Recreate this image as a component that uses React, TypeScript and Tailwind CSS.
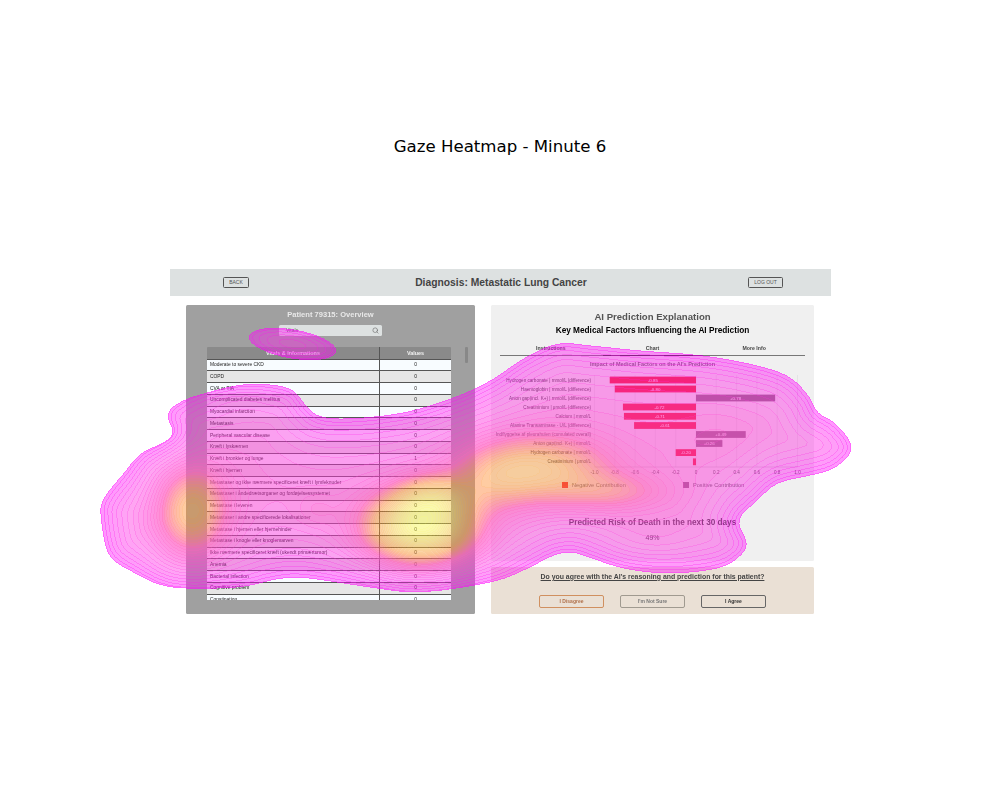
import { Search } from 'lucide-react'

const rows = [
  ['Moderate to severe CKD', '0'],
  ['COPD', '0'],
  ['CVA or TIA', '0'],
  ['Uncomplicated diabetes mellitus', '0'],
  ['Myocardial infarction', '0'],
  ['Metastasis', '0'],
  ['Peripheral vascular disease', '0'],
  ['Kræft i lyskærnen', '0'],
  ['Kræft i bronkier og lunge', '1'],
  ['Kræft i hjernen', '0'],
  ['Metastaser og ikke nærmere specificeret kræft i lymfeknuder', '0'],
  ['Metastaser i åndedrætsorganer og fordøjelsessystemet', '0'],
  ['Metastase i leveren', '0'],
  ['Metastaser i andre specificerede lokalisationer', '0'],
  ['Metastase i hjernen eller hjernehinder', '0'],
  ['Metastase i knogle eller knoglemarven', '0'],
  ['Ikke nærmere specificeret kræft (ukendt primærtumor)', '0'],
  ['Anemia', '0'],
  ['Bacterial infection', '0'],
  ['Cognitive problem', '0'],
  ['Constipation', '0'],
]

const factors = [
  { label: 'Hydrogen carbonate | mmol/L (difference)', value: -0.85 },
  { label: 'Haemoglobin | mmol/L (difference)', value: -0.8 },
  { label: 'Anion gap(incl. K+) | mmol/L (difference)', value: 0.78 },
  { label: 'Creatininium | μmol/L (difference)', value: -0.72 },
  { label: 'Calcium | mmol/L', value: -0.71 },
  { label: 'Alanine Transaminase - U/L (difference)', value: -0.61 },
  { label: 'Indflyggelse af pleurahulen (cumulated overall)', value: 0.49 },
  { label: 'Anion gap(incl. K+) | mmol/L', value: 0.26 },
  { label: 'Hydrogen carbonate | mmol/L', value: -0.2 },
  { label: 'Creatininium | μmol/L', value: -0.03 },
]

const ticks = ['-1.0', '-0.8', '-0.6', '-0.4', '-0.2', '0', '0.2', '0.4', '0.6', '0.8', '1.0']

// outline of the gaze density, page coordinates
const outline = [
  [100, 505], [107, 492], [123, 473], [140, 453], [163, 442], [173, 432], [167, 418], [170, 408],
  [187, 398], [207, 392], [230, 386], [257, 383], [290, 388], [303, 402], [317, 415], [347, 418],
  [403, 412], [453, 397], [490, 380], [523, 358], [557, 343], [590, 345], [640, 350], [703, 355],
  [757, 365], [790, 377], [810, 398], [817, 412], [835, 423], [852, 447], [835, 467], [810, 475],
  [777, 483], [757, 500], [738, 520], [747, 543], [738, 557], [717, 568], [670, 573], [623, 568],
  [583, 555], [570, 552], [553, 555], [523, 570], [490, 582], [420, 592], [370, 587], [337, 582],
  [297, 577], [270, 580], [237, 587], [170, 587], [133, 572], [110, 557], [103, 537], [100, 513],
]

// x, y, amplitude, sigma x, sigma y
const peaks = [
  [420, 527, 0.74, 36, 24],
  [432, 497, 0.26, 24, 15],
  [192, 510, 0.36, 24, 32],
  [540, 468, 0.34, 48, 24],
  [612, 492, 0.16, 40, 14],
  [492, 480, 0.14, 30, 22],
  [315, 510, 0.05, 14, 12],
  [225, 398, 0.03, 28, 10],
  [720, 435, 0.03, 30, 22],
  [650, 540, 0.03, 30, 14],
]

const colorStops = [
  [0, 255, 0, 255],
  [0.35, 255, 90, 190],
  [0.55, 255, 140, 40],
  [0.8, 250, 210, 60],
  [1, 255, 255, 60],
]

const X0 = 90
const Y0 = 322
const W = 772
const H = 280
const STEP = 3
const LEVELS = 44

function buildHeatmap() {
  const poly: number[][] = []
  const n = outline.length
  for (let i = 0; i < n; i++) {
    const p0 = outline[(i + n - 1) % n]
    const p1 = outline[i]
    const p2 = outline[(i + 1) % n]
    const p3 = outline[(i + 2) % n]
    for (let k = 0; k < 3; k++) {
      const t = k / 3
      const c = (a: number, b: number, d: number, e: number) =>
        0.5 * (2 * b + (d - a) * t + (2 * a - 5 * b + 4 * d - e) * t * t + (3 * b - a - 3 * d + e) * t * t * t)
      poly.push([c(p0[0], p1[0], p2[0], p3[0]), c(p0[1], p1[1], p2[1], p3[1])])
    }
  }

  const cw = Math.ceil(W / STEP) + 2
  const ch = Math.ceil(H / STEP) + 2
  let sdf = new Float32Array(cw * ch)
  for (let j = 0; j < ch; j++) {
    for (let i = 0; i < cw; i++) {
      const x = X0 + i * STEP
      const y = Y0 + j * STEP
      let best = 1e9
      let inside = false
      for (let a = 0, b = poly.length - 1; a < poly.length; b = a++) {
        const [ax, ay] = poly[a]
        const [bx, by] = poly[b]
        const dx = bx - ax
        const dy = by - ay
        const u = Math.max(0, Math.min(1, ((x - ax) * dx + (y - ay) * dy) / (dx * dx + dy * dy)))
        const ex = x - ax - u * dx
        const ey = y - ay - u * dy
        best = Math.min(best, ex * ex + ey * ey)
        if (ay > y !== by > y && x < ((bx - ax) * (y - ay)) / (by - ay) + ax) inside = !inside
      }
      sdf[j * cw + i] = (inside ? 1 : -1) * Math.sqrt(best)
    }
  }
  // soften the creases of the distance field
  for (let pass = 0; pass < 2; pass++) {
    const next = new Float32Array(sdf)
    for (let j = 1; j < ch - 1; j++) {
      for (let i = 1; i < cw - 1; i++) {
        let s = 0
        for (let b = -1; b <= 1; b++) for (let a = -1; a <= 1; a++) s += sdf[(j + b) * cw + i + a]
        next[j * cw + i] = s / 9
      }
    }
    sdf = next
  }

  const level = new Int16Array(W * H)
  for (let y = 0; y < H; y++) {
    for (let x = 0; x < W; x++) {
      const gx = x / STEP
      const gy = y / STEP
      const i = Math.floor(gx)
      const j = Math.floor(gy)
      const fx = gx - i
      const fy = gy - j
      const d =
        sdf[j * cw + i] * (1 - fx) * (1 - fy) +
        sdf[j * cw + i + 1] * fx * (1 - fy) +
        sdf[(j + 1) * cw + i] * (1 - fx) * fy +
        sdf[(j + 1) * cw + i + 1] * fx * fy
      const px = x + X0
      const py = y + Y0
      let f = 0
      if (d > 0) {
        f = 0.22 * (1 - Math.exp(-d / 30))
        for (const [cx, cy, amp, sx, sy] of peaks) {
          f += amp * Math.exp(-((px - cx) ** 2) / (2 * sx * sx) - ((py - cy) ** 2) / (2 * sy * sy))
        }
      }
      // small separate patch over the search field
      const ex = px - 292
      const ey = py - 343.5
      const rx = (ex * 0.985 + ey * 0.17) / 44
      const ry = (-ex * 0.17 + ey * 0.985) / 14.5
      const r = rx * rx + ry * ry
      if (r < 1) f = Math.max(f, 0.01 + 0.09 * (1 - r))
      level[y * W + x] = f > 0 ? Math.min(LEVELS, Math.floor(f * LEVELS) + 1) : 0
    }
  }

  const fills: string[][] = Array.from({ length: LEVELS + 1 }, () => [])
  const lines: string[][] = Array.from({ length: LEVELS + 1 }, () => [])
  for (let y = 0; y < H; y++) {
    let x = 0
    while (x < W) {
      const l = level[y * W + x]
      const isEdge = (cx: number) =>
        (cx > 0 && level[y * W + cx - 1] < l) ||
        (cx < W - 1 && level[y * W + cx + 1] < l) ||
        (y > 0 && level[(y - 1) * W + cx] < l) ||
        (y < H - 1 && level[(y + 1) * W + cx] < l)
      const edge = l > 0 && isEdge(x)
      let end = x + 1
      while (end < W && level[y * W + end] === l && isEdge(end) === edge) end++
      if (l > 0) (edge ? lines : fills)[l].push(`M${x + X0} ${y + Y0}h${end - x}v1h-${end - x}z`)
      x = end
    }
  }
  return { fills, lines }
}

const heat = buildHeatmap()

function levelColor(l: number) {
  const t = Math.min(1, l / LEVELS)
  let s = 0
  while (s < colorStops.length - 2 && t > colorStops[s + 1][0]) s++
  const a = colorStops[s]
  const b = colorStops[s + 1]
  const u = (t - a[0]) / (b[0] - a[0])
  const mix = (k: number) => Math.round(a[k] + (b[k] - a[k]) * u)
  return `rgb(${mix(1)},${mix(2)},${mix(3)})`
}

// the band between the pink field and the warm peaks is the most opaque one
function levelOpacity(l: number) {
  const t = l / LEVELS
  return 0.42 + 0.28 * Math.max(0, 1 - Math.abs(t - 0.36) / 0.2)
}

function GazeOverlay() {
  return (
    <svg className="absolute left-0 top-0 pointer-events-none" width={1000} height={800} shapeRendering="crispEdges">
      {heat.fills.map((d, l) =>
        d.length ? <path key={`f${l}`} d={d.join('')} fill={levelColor(l)} fillOpacity={levelOpacity(l)} /> : null,
      )}
      {heat.lines.map((d, l) =>
        d.length ? (
          <path
            key={`l${l}`}
            d={d.join('')}
            fill={levelColor(l)}
            fillOpacity={levelOpacity(l) + 0.06 + 0.14 * Math.max(0, 1 - l / LEVELS / 0.3)}
          />
        ) : null,
      )}
    </svg>
  )
}

function FactorChart() {
  // svg origin sits at page (491, 373)
  const zero = 205
  const unit = 101.5
  const rowY = [7, 16, 25, 34, 43.3, 52.5, 61.5, 70.5, 79.6, 88.8]
  return (
    <svg width={323} height={106} className="block">
      {ticks.map((t, i) => {
        const x = zero + (i - 5) * 0.2 * unit
        return (
          <g key={t}>
            <line x1={x} x2={x} y1={2} y2={94} stroke="#d8d8d8" strokeWidth={0.5} />
            <text x={x} y={100.5} fontSize={4.6} fill="#555" textAnchor="middle">
              {t}
            </text>
          </g>
        )
      })}
      <line x1={zero - unit} x2={zero + unit} y1={94} y2={94} stroke="#bbb" strokeWidth={0.5} />
      {factors.map((f, i) => {
        const w = Math.abs(f.value) * unit
        const x = f.value < 0 ? zero - w : zero
        return (
          <g key={f.label}>
            <text x={100} y={rowY[i] + 1.6} fontSize={4.6} fill="#444" textAnchor="end">
              {f.label}
            </text>
            <rect x={x} y={rowY[i] - 3.4} width={w} height={6.8} fill={f.value < 0 ? '#f02030' : '#8a6a80'} />
            {w > 12 && (
              <text x={x + w / 2} y={rowY[i] + 1.6} fontSize={4.4} fill="#fff" textAnchor="middle">
                {f.value > 0 ? `+${f.value.toFixed(2)}` : f.value.toFixed(2)}
              </text>
            )}
          </g>
        )
      })}
    </svg>
  )
}

export default function App() {
  return (
    <div className="relative w-[1000px] h-[800px] bg-white overflow-hidden font-['Liberation_Sans',sans-serif]">
      <h1 className="pt-[135px] h-[269px] text-center text-[16.6px] leading-[24px] text-black font-['DejaVu_Sans',sans-serif]">
        Gaze Heatmap - Minute 6
      </h1>

      <div className="w-[661px] ml-[170px] blur-[0.3px]">
        {/* Top bar */}
        <div className="h-[27px] bg-[#dde1e1] flex items-center justify-between pl-[53px] pr-[48px]">
          <button className="w-[26px] h-[11px] border border-[#555] rounded-[1.5px] text-[5px] leading-none text-[#555]">
            BACK
          </button>
          <div className="ml-[5px] text-[10.3px] font-bold text-[#444]">Diagnosis: Metastatic Lung Cancer</div>
          <button className="w-[35px] h-[11px] border border-[#555] rounded-[1.5px] text-[5px] leading-none text-[#555]">
            LOG OUT
          </button>
        </div>

        <div className="flex gap-[16px] pl-[16px] pt-[9px]">
          {/* Patient panel */}
          <div className="relative w-[289px] h-[309px] bg-[#a0a0a0] rounded-[1.5px] px-[21px]">
            <div className="h-[19px] flex items-center justify-center text-[7.55px] font-bold text-[#e8e8e8]">
              Patient 79315: Overview
            </div>
            <div className="mt-[1px] ml-[72px] w-[103px] h-[11px] bg-[#dde1e1] rounded-[1.5px] flex items-center justify-between pl-[7px] pr-[3px]">
              <span className="text-[5px] text-[#666]">Vitals</span>
              <Search className="w-[7px] h-[7px] text-[#666]" />
            </div>
            <div className="mt-[11px] w-[244px] h-[253px] overflow-hidden">
              <div className="grid grid-cols-[173px_71px] h-[12.5px] bg-[#8a8a8a] rounded-t-[1px] border-b border-[#555] text-[5.4px] font-bold text-[#f2f2f2]">
                <div className="flex items-center justify-center border-r border-[#555]">Vitals &amp; Informations</div>
                <div className="flex items-center justify-center">Values</div>
              </div>
              {rows.map(([name, value], i) => (
                <div
                  key={name}
                  className={`grid grid-cols-[173px_71px] h-[11.75px] border-b border-[#555] text-[4.9px] text-[#222] ${
                    i % 2 === 0 ? 'bg-[#f8fcff]' : 'bg-[#e6e6e6]'
                  }`}
                >
                  <div className="flex items-center pl-[3px] border-r border-[#555] whitespace-nowrap">{name}</div>
                  <div className="flex items-center justify-center">{value}</div>
                </div>
              ))}
            </div>
            <div className="absolute left-[279px] top-[42px] w-[3px] h-[16px] rounded-[1px] bg-[#888]" />
          </div>

          <div className="w-[323px] flex flex-col gap-[6px]">
            {/* Explanation panel */}
            <div className="h-[256px] bg-[#f0f0f0] rounded-[1.5px]">
              <div className="h-[19px] pt-[5px] flex items-center justify-center text-[9.6px] font-bold text-[#555]">
                AI Prediction Explanation
              </div>
              <div className="h-[14px] flex items-center justify-center text-[8.25px] font-bold text-black">
                Key Medical Factors Influencing the AI Prediction
              </div>
              <div className="relative mt-[4px] mx-[9px] h-[14px] grid grid-cols-3 border-b border-[#777] text-[5.2px] font-bold text-[#444]">
                <div className="flex items-center justify-center">Instructions</div>
                <div className="flex items-center justify-center">Chart</div>
                <div className="flex items-center justify-center">More Info</div>
                <div className="absolute left-[103px] -bottom-px w-[100px] h-[1px] bg-[#333]" />
              </div>
              <div className="h-[17px] flex items-center justify-center text-[5.5px] font-bold text-[#666]">
                Impact of Medical Factors on the AI&apos;s Prediction
              </div>
              <FactorChart />
              <div className="h-[12px] flex items-center text-[5.6px] text-[#666]">
                <span className="ml-[71px] w-[6px] h-[6px] bg-[#f02030]" />
                <span className="ml-[4px] w-[111px]">Negative Contribution</span>
                <span className="w-[6px] h-[6px] bg-[#8a6a80]" />
                <span className="ml-[4px]">Positive Contribution</span>
              </div>
              <div className="mt-[26px] h-[12px] flex items-center justify-center text-[8.2px] font-bold text-[#444]">
                Predicted Risk of Death in the next 30 days
              </div>
              <div className="mt-[3px] h-[12px] flex items-center justify-center text-[7px] text-[#444]">49%</div>
            </div>

            {/* Agreement panel */}
            <div className="h-[47px] bg-[#eae0d5] rounded-[1.5px] flex flex-col items-center">
              <div className="h-[20px] flex items-center text-[6.9px] font-bold underline text-[#444]">
                Do you agree with the AI&apos;s reasoning and prediction for this patient?
              </div>
              <div className="mt-[8px] flex gap-[16px]">
                <button className="w-[65px] h-[13px] border border-[#d09060] rounded-[2px] text-[5px] font-bold leading-none text-[#b0704a]">
                  I Disagree
                </button>
                <button className="w-[65px] h-[13px] border border-[#a09a90] rounded-[2px] text-[5px] font-bold leading-none text-[#777]">
                  I&apos;m Not Sure
                </button>
                <button className="w-[65px] h-[13px] border border-[#666] rounded-[2px] text-[5px] font-bold leading-none text-[#333]">
                  I Agree
                </button>
              </div>
            </div>
          </div>
        </div>
      </div>

      <GazeOverlay />
    </div>
  )
}
